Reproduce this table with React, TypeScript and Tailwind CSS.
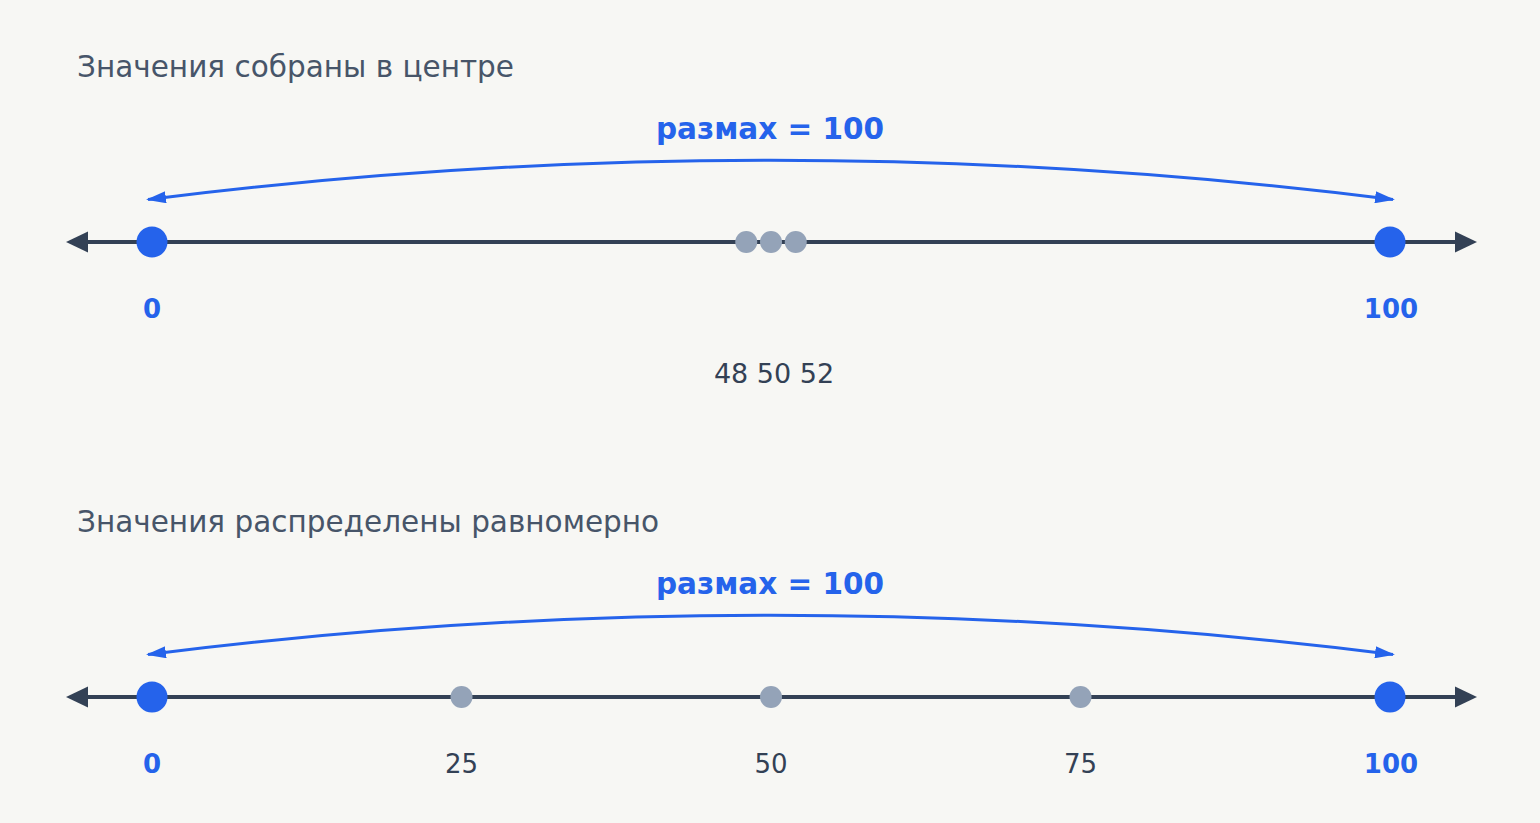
import React from "react";

const X0 = 152;
const X1 = 1390;
const sx = (v: number) => X0 + ((X1 - X0) * v) / 100;

type Props = {
  offset: number;
  height: number;
  greys: number[];
  labels: number[];
  extra?: string;
};

function NumberLine({ offset, height, greys, labels, extra }: Props) {
  const id = `arr${height}`;
  return (
    <svg width={1540} height={height} className="block" style={{ fontFamily: '"DejaVu Sans", sans-serif' }}>
      <defs>
        <marker
          id={id}
          markerUnits="userSpaceOnUse"
          markerWidth={20}
          markerHeight={12}
          refX={18}
          refY={6}
          orient="auto-start-reverse"
        >
          <path d="M0,0 L20,6 L0,12 z" fill="#2563eb" />
        </marker>
      </defs>
      <g transform={`translate(0,${-offset})`}>
        <text x={770} y={139} textAnchor="middle" fontSize={29.5} fontWeight={700} fill="#2563eb">
          размах = 100
        </text>
        <path
          d="M148,199.5 Q770,121 1393,199.5"
          fill="none"
          stroke="#2563eb"
          strokeWidth={3}
          markerStart={`url(#${id})`}
          markerEnd={`url(#${id})`}
        />
        <line x1={82} y1={242} x2={1462} y2={242} stroke="#334155" strokeWidth={4} />
        <polygon points="66,242 88,231.5 88,252.5" fill="#334155" />
        <polygon points="1477,242 1455,231.5 1455,252.5" fill="#334155" />
        <circle cx={X0} cy={242} r={15.5} fill="#2563eb" />
        <circle cx={X1} cy={242} r={15.5} fill="#2563eb" />
        {greys.map((g) => (
          <circle key={g} cx={sx(g)} cy={242} r={11} fill="#94a3b8" />
        ))}
        <text x={X0} y={318} textAnchor="middle" fontSize={26} fontWeight={700} fill="#2563eb">
          0
        </text>
        <text x={X1 + 1} y={318} textAnchor="middle" fontSize={26} fontWeight={700} fill="#2563eb">
          100
        </text>
        {labels.map((l) => (
          <text key={l} x={sx(l)} y={318} textAnchor="middle" fontSize={26} fill="#334155">
            {l}
          </text>
        ))}
        {extra && (
          <text x={774} y={383} textAnchor="middle" fontSize={27} fill="#334155">
            {extra}
          </text>
        )}
      </g>
    </svg>
  );
}

export default function App() {
  return (
    <div
      className="w-[1540px] h-[823px] overflow-hidden bg-[#f7f7f4] flex flex-col"
      style={{ fontFamily: '"DejaVu Sans", sans-serif' }}
    >
      <h2 className="pt-[54px] pl-[77px] text-[29.5px] leading-[26px] text-[#475569] font-normal">
        Значения собраны в центре
      </h2>
      <NumberLine offset={80} height={429} greys={[48, 50, 52]} labels={[]} extra="48 50 52" />
      <h2 className="pl-[77px] text-[29.5px] leading-[26px] text-[#475569] font-normal">
        Значения распределены равномерно
      </h2>
      <NumberLine offset={80} height={288} greys={[25, 50, 75]} labels={[25, 50, 75]} />
    </div>
  );
}
